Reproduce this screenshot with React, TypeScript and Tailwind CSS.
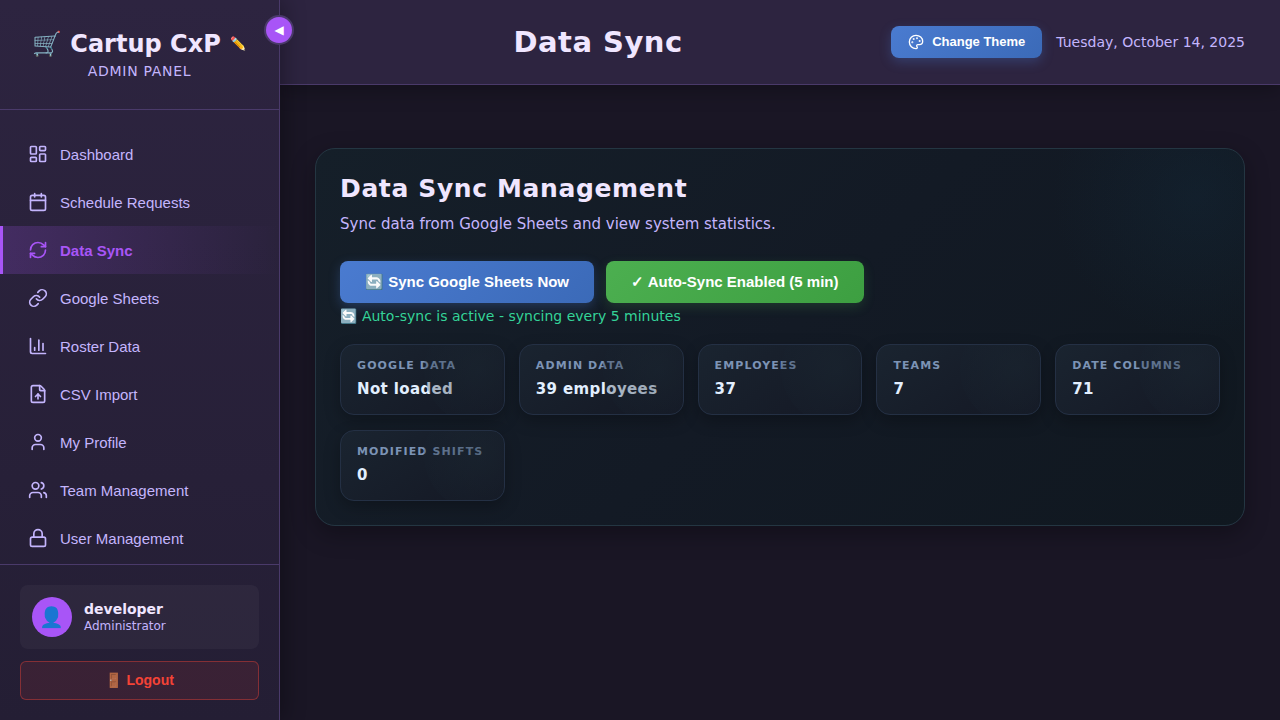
import React from "react";
import {
  LayoutDashboard,
  Calendar,
  RefreshCw,
  Link,
  ChartColumn,
  FileUp,
  User,
  Users,
  Lock,
  Palette,
} from "lucide-react";

const navItems = [
  { label: "Dashboard", icon: LayoutDashboard },
  { label: "Schedule Requests", icon: Calendar },
  { label: "Data Sync", icon: RefreshCw, active: true },
  { label: "Google Sheets", icon: Link },
  { label: "Roster Data", icon: ChartColumn },
  { label: "CSV Import", icon: FileUp },
  { label: "My Profile", icon: User },
  { label: "Team Management", icon: Users },
  { label: "User Management", icon: Lock },
];

const stats = [
  { label: "Google Data", value: "Not loaded" },
  { label: "Admin Data", value: "39 employees" },
  { label: "Employees", value: "37" },
  { label: "Teams", value: "7" },
  { label: "Date Columns", value: "71" },
  { label: "Modified Shifts", value: "0" },
];

function Sidebar() {
  return (
    <aside className="relative z-10 flex w-[280px] shrink-0 flex-col border-r border-[#4a3a6a] bg-linear-to-b from-[#2d2440] to-[#241e34] shadow-[4px_0_20px_rgba(0,0,0,0.3)]">
      <button
        type="button"
        aria-label="Collapse sidebar"
        className="absolute top-[17px] -right-[13px] flex size-[26px] items-center justify-center rounded-full bg-[#a855f7] font-['Liberation_Sans','DejaVu_Sans',sans-serif] text-xs text-white shadow-[0_0_0_2px_#4a3a6a]"
      >
        ◀
      </button>
      <div className="flex h-[110px] shrink-0 flex-col items-center border-b border-[#4a3a6a] pt-7">
        <div className="flex items-center text-2xl font-bold whitespace-pre text-[#f0e6ff]">
          <span>🛒 Cartup CxP</span>
          <button type="button" aria-label="Edit title" className="ml-2.5 text-[13px] leading-8">✏️</button>
        </div>
        <p className="text-sm leading-[22px] tracking-wider text-[#c4b5fd]">ADMIN PANEL</p>
      </div>
      <nav className="min-h-0 flex-1 overflow-hidden pt-5">
        {navItems.map(({ label, icon: Icon, active }) => (
          <a
            key={label}
            href="#"
            className={
              active
                ? "flex h-12 items-center gap-3 border-l-3 border-[#a855f7] bg-linear-to-r from-[#a855f7]/20 to-transparent pl-[25px] font-['Liberation_Sans',sans-serif] text-[15px] leading-[17px] font-bold text-[#a855f7]"
                : "flex h-12 items-center gap-3 border-l-3 border-transparent pl-[25px] font-['Liberation_Sans',sans-serif] text-[15px] leading-[17px] text-[#c4b5fd]"
            }
          >
            <Icon size={20} strokeWidth={2} />
            <span>{label}</span>
          </a>
        ))}
      </nav>
      <div className="flex flex-col gap-3 border-t border-[#4a3a6a] p-5">
        <div className="flex h-16 items-center gap-3 rounded-lg bg-white/4 px-3">
          <div className="flex size-10 items-center justify-center rounded-full bg-[#a855f7] text-xl">👤</div>
          <div>
            <p className="text-sm leading-[18px] font-bold text-[#f0e6ff]">developer</p>
            <p className="text-xs leading-4 text-[#c4b5fd]">Administrator</p>
          </div>
        </div>
        <button
          type="button"
          className="h-[39px] rounded-md border border-[#f44336]/40 bg-[#f44336]/10 pb-0.5 font-['Liberation_Sans','Noto_Color_Emoji',sans-serif] text-sm font-bold text-[#f44336]"
        >
          🚪 Logout
        </button>
      </div>
    </aside>
  );
}

function Header() {
  return (
    <header className="flex h-[85px] shrink-0 items-center gap-2.5 border-b border-[#4a3a6a] bg-[#2d2440] px-[35px] shadow-[0_4px_20px_rgba(0,0,0,0.3)]">
      <h1 className="flex-1 text-center text-[29px] leading-9 font-bold tracking-[0.5px] text-[#f0e6ff]">Data Sync</h1>
      <div className="flex items-center gap-[14px]">
        <button
          type="button"
          className="flex h-8 items-center gap-2 rounded-lg bg-linear-135 from-[#4a7bd0] to-[#3b6ab8] px-[17px] font-['Liberation_Sans',sans-serif] text-[13px] font-bold text-white shadow-[0_4px_12px_rgba(74,123,208,0.3)]"
        >
          <Palette size={16} />
          Change Theme
        </button>
        <time dateTime="2025-10-14" className="text-sm text-[#c4b5fd]">
          Tuesday, October 14, 2025
        </time>
      </div>
    </header>
  );
}

function StatCard({ label, value }: { label: string; value: string }) {
  return (
    <div className="relative h-[71px] overflow-hidden rounded-[14px] border border-[#243044] bg-linear-145 from-[#1a2430] to-[#141824] px-4 pt-[13px] shadow-[0_6px_16px_rgba(0,0,0,0.25)]">
      <p className="text-[11px] leading-4 font-bold tracking-widest text-[#7c93b5] uppercase">{label}</p>
      <p className="mt-[3px] text-[15px] leading-6 font-bold tracking-wide text-[#e2efff]">{value}</p>
      <div className="pointer-events-none absolute -top-8 -right-8 size-28 rounded-full bg-[radial-gradient(circle,rgba(28,42,52,0.4),rgba(20,26,40,0.2))]" />
    </div>
  );
}

export default function App() {
  return (
    <div className="flex h-screen overflow-hidden bg-[#1a1625] font-['DejaVu_Sans','Noto_Color_Emoji',sans-serif]">
      <Sidebar />
      <div className="flex min-w-0 flex-1 flex-col">
        <Header />
        <main className="flex-1 px-[35px] pt-[63px]">
          <section className="relative overflow-hidden rounded-[20px] border border-[#243642] bg-linear-135 from-[#151f29] via-[#131a25] to-[#101820] p-6 shadow-[0_8px_24px_rgba(0,0,0,0.3)]">
            <div className="pointer-events-none absolute -top-24 -right-24 size-72 rounded-full bg-[radial-gradient(circle,rgba(20,46,65,0.3),transparent_70%)]" />
            <h2 className="text-[25px] leading-8 font-bold tracking-wide text-[#f0e6ff]">Data Sync Management</h2>
            <p className="mt-2 text-[15px] leading-[22px] text-[#c4b5fd]">
              Sync data from Google Sheets and view system statistics.
            </p>
            <div className="mt-[26px] flex gap-3 font-['Liberation_Sans',sans-serif] text-[15px] font-semibold text-white">
              <button type="button" className="h-[42px] rounded-lg bg-linear-135 from-[#4a7bd0] to-[#3b6ab8] px-[25px] shadow-[0_4px_12px_rgba(74,123,208,0.3)]">
                🔄 Sync Google Sheets Now
              </button>
              <button type="button" className="h-[42px] rounded-lg bg-linear-135 from-[#4caf50] to-[#3d9f41] px-[25px] shadow-[0_4px_12px_rgba(76,175,80,0.2)]">
                ✓ Auto-Sync Enabled (5 min)
              </button>
            </div>
            <p className="mt-[3px] text-sm leading-5 text-[#34d399]">🔄 Auto-sync is active - syncing every 5 minutes</p>
            <div className="mt-[18px] grid grid-cols-5 gap-x-[14px] gap-y-[15px]">
              {stats.map((s) => (
                <StatCard key={s.label} label={s.label} value={s.value} />
              ))}
            </div>
          </section>
        </main>
      </div>
    </div>
  );
}
